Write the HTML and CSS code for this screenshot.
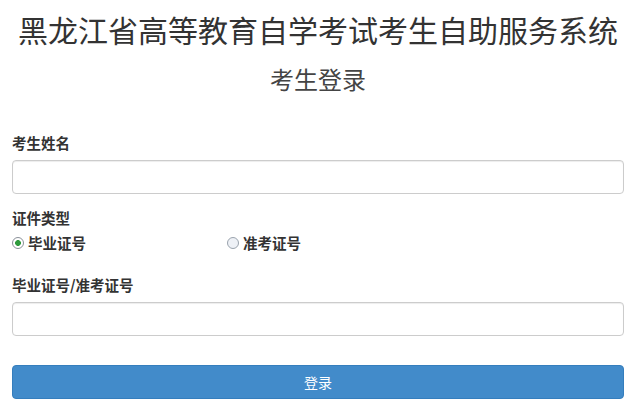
FILE: index.html
```html
<!DOCTYPE html>
<html lang="zh-CN">
<head>
    <meta charset="UTF-8">
    <meta name="viewport" content="width=device-width, initial-scale=1.0">
    <title>考生登录</title>
    <link rel="stylesheet" href="styles.css">
</head>
<body>
    <div class="container">
        <h1 class="site-title">黑龙江省高等教育自学考试考生自助服务系统</h1>
        <h2 class="page-title">考生登录</h2>

        <form class="login-form">
            <div class="form-group">
                <label class="field-label" for="name">考生姓名</label>
                <input class="form-control" type="text" id="name">
            </div>

            <div class="form-group">
                <div class="field-label">证件类型</div>
                <div class="radio-row">
                    <label class="radio-item first">
                        <input type="radio" name="idtype" checked>
                        <span>毕业证号</span>
                    </label>
                    <label class="radio-item">
                        <input type="radio" name="idtype">
                        <span>准考证号</span>
                    </label>
                </div>
            </div>

            <div class="form-group">
                <label class="field-label" for="idno">毕业证号/准考证号</label>
                <input class="form-control" type="text" id="idno">
            </div>

            <button class="btn-login" type="button">登录</button>
        </form>
    </div>
</body>
</html>
```

FILE: styles.css
```css
* {
    margin: 0;
    padding: 0;
    box-sizing: border-box;
}

body {
    font-family: "Noto Sans CJK SC", "Noto Sans", sans-serif;
    color: #333;
    background: #fff;
}

.container {
    padding: 0 14px 0 12px;
}

.site-title {
    margin-top: 11px;
    font-size: 30px;
    line-height: 36px;
    font-weight: normal;
    text-align: center;
    color: #333;
}

.page-title {
    margin-top: 17px;
    font-size: 24px;
    line-height: 30px;
    font-weight: normal;
    text-align: center;
    color: #444;
}

.login-form {
    margin-top: 39px;
}

.form-group {
    margin-bottom: 14px;
}

.form-group:nth-child(2) {
    margin-bottom: 22px;
}

.field-label {
    display: block;
    font-size: 14.5px;
    line-height: 20px;
    font-weight: bold;
    color: #333;
    margin-bottom: 7px;
}

.form-control {
    display: block;
    width: 100%;
    height: 34px;
    border: 1px solid #ccc;
    border-radius: 4px;
    box-shadow: inset 0 1px 1px rgba(0, 0, 0, 0.075);
    font-size: 14px;
    padding: 6px 12px;
}

.radio-row {
    display: flex;
    margin-top: -2px;
}

.radio-item {
    display: flex;
    align-items: center;
    font-size: 14.5px;
    line-height: 20px;
    font-weight: bold;
    color: #333;
}

.radio-item.first {
    width: 215px;
}

.radio-item input {
    appearance: none;
    -webkit-appearance: none;
    width: 12px;
    height: 12px;
    border: 1px solid #9aa3ad;
    border-radius: 50%;
    background: #eef1f6;
    margin-right: 4px;
}

.radio-item input:checked {
    background: radial-gradient(circle, #2e9a3c 0, #2e9a3c 2.6px, #fff 3.2px);
    border-color: #8a9098;
}

.btn-login {
    display: block;
    width: 100%;
    height: 34px;
    margin-top: 29px;
    background: #428bca;
    border: 1px solid #357ebd;
    border-radius: 4px;
    color: #fff;
    font-family: "Noto Sans CJK SC", sans-serif;
    font-size: 14px;
}
```
